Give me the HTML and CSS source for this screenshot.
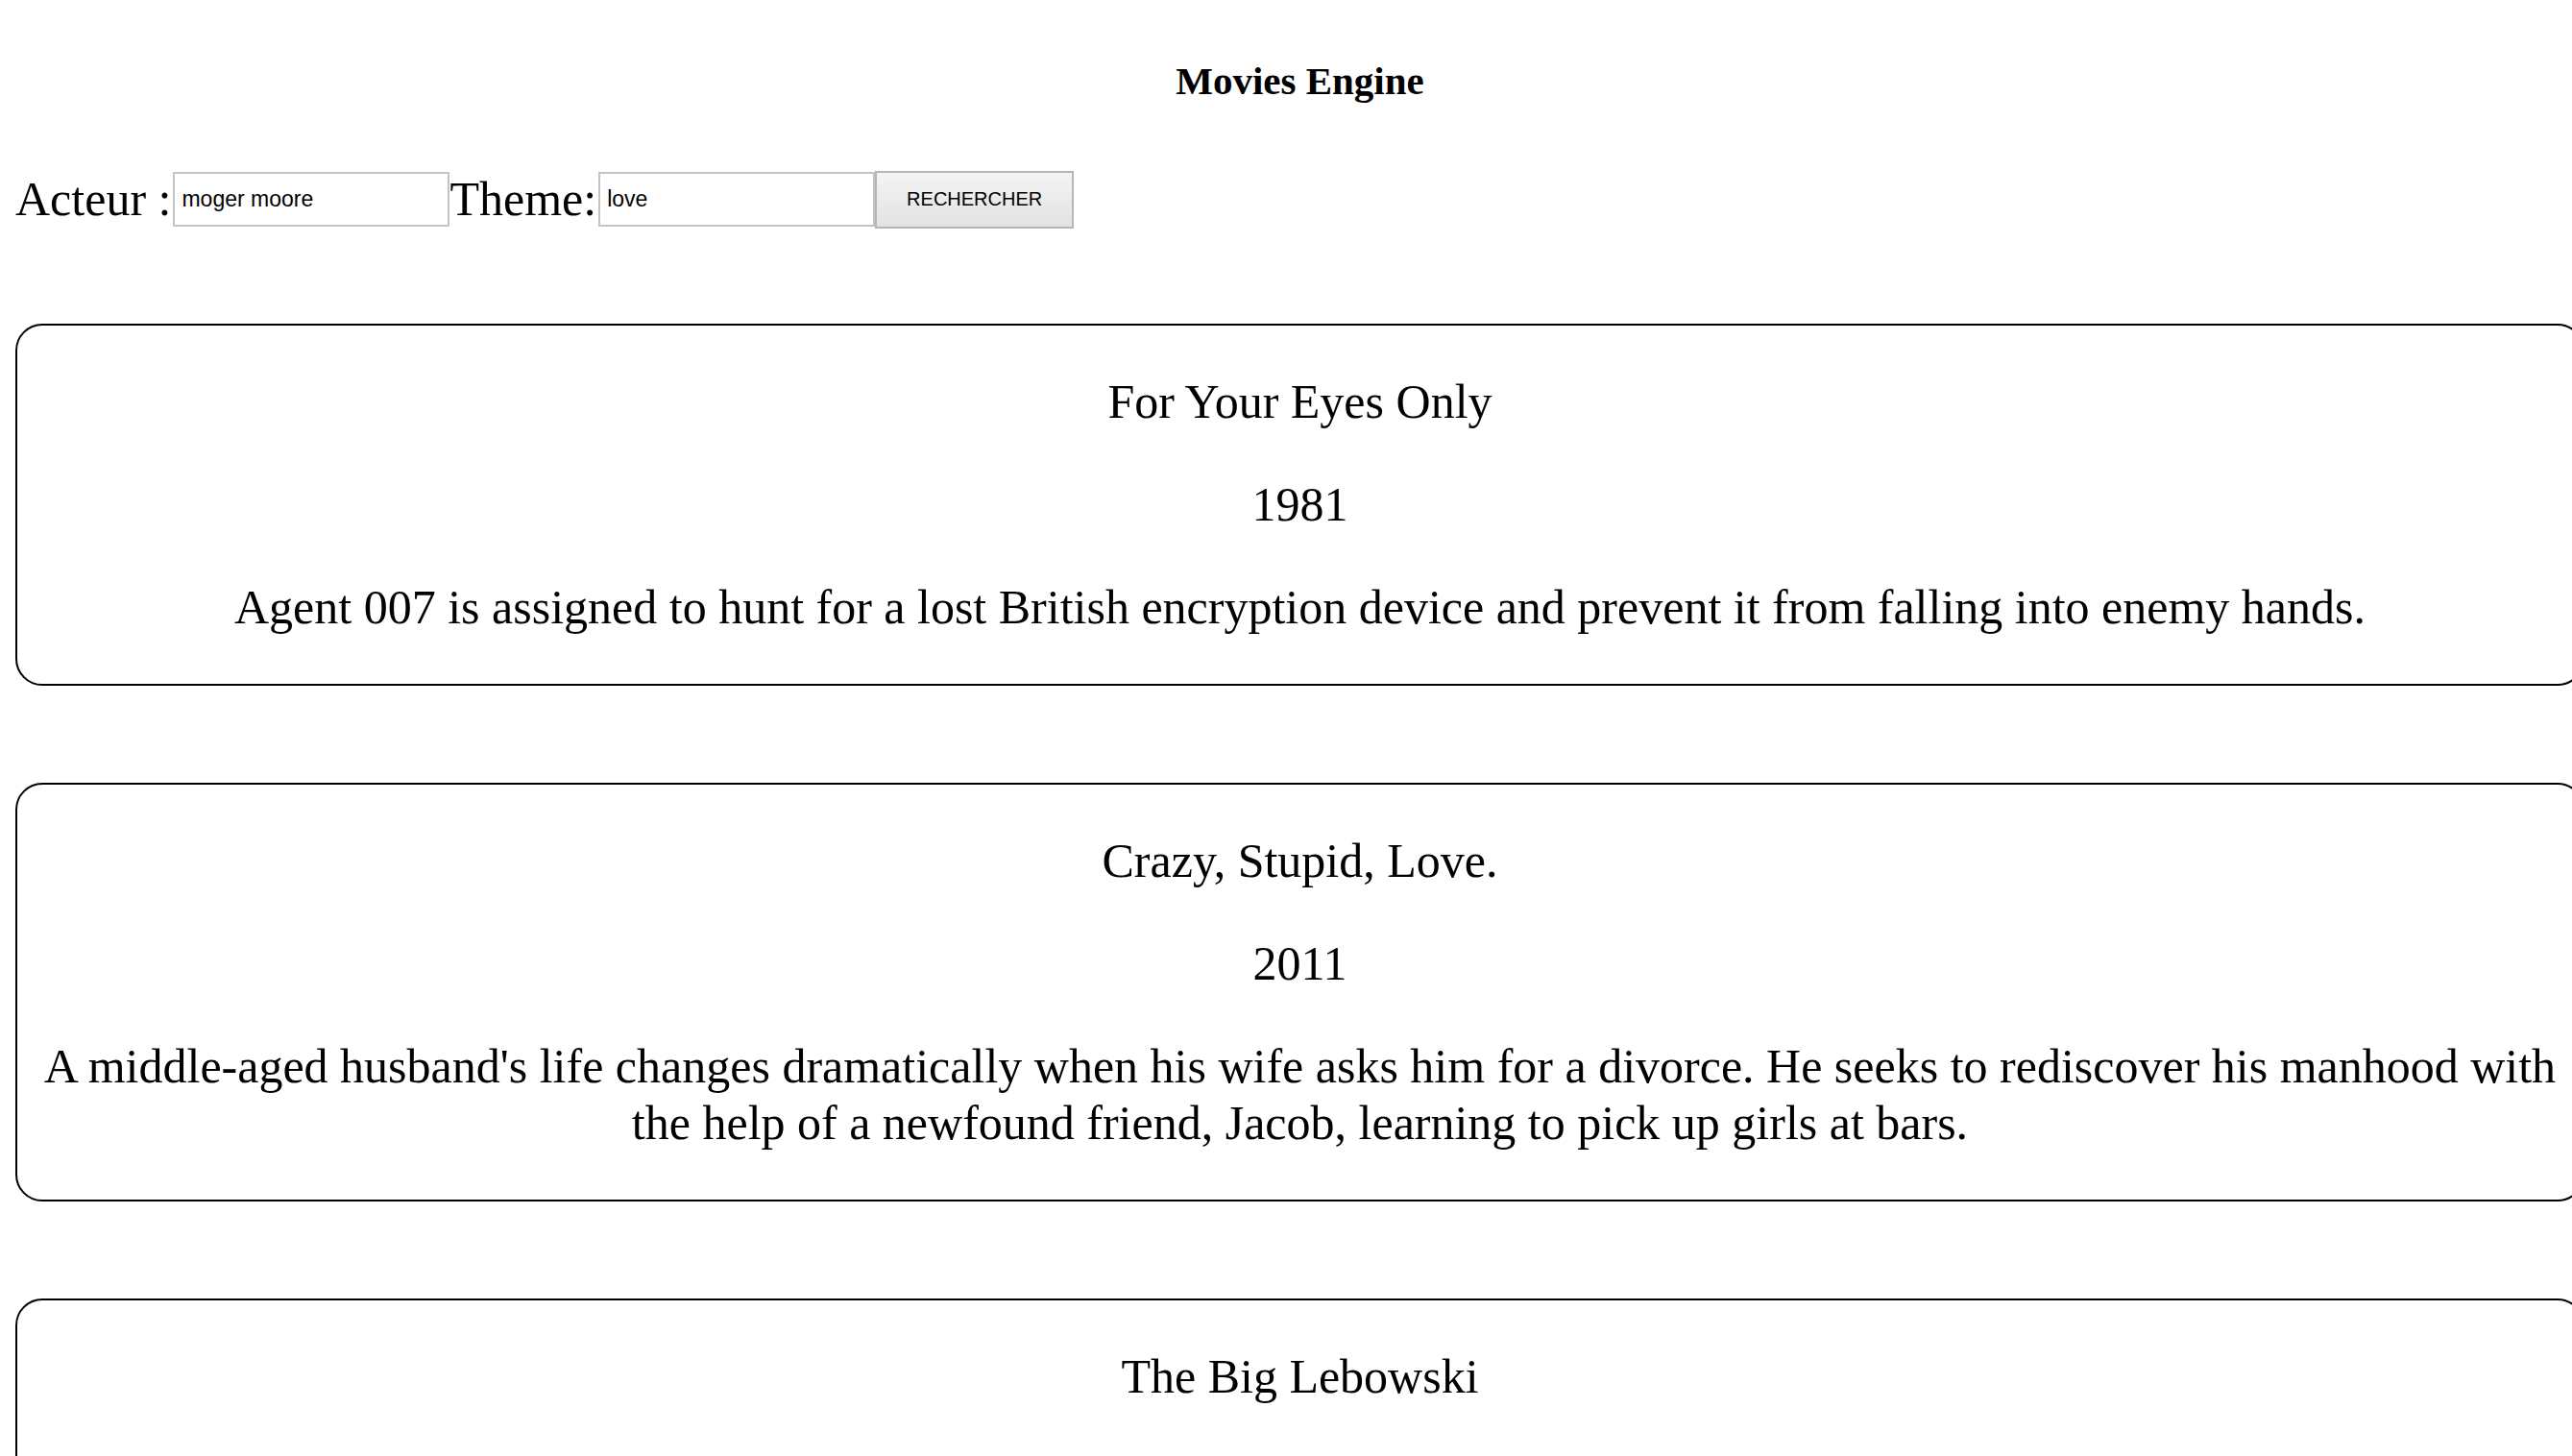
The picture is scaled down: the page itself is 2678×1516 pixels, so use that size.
FILE: index.html
```html
<!DOCTYPE html>
<html lang="fr">
<head>
<meta charset="utf-8">
<title>Movies Engine</title>
<link rel="stylesheet" href="styles.css">
</head>
<body>
<div class="page">
  <h1 class="app-title">Movies Engine</h1>
  <form class="search">
    <label class="search-label" for="acteur">Acteur :</label><input id="acteur" class="search-input" type="text" value="moger moore"><label class="search-label" for="theme">Theme:</label><input id="theme" class="search-input" type="text" value="love"><button type="button" class="search-btn">RECHERCHER</button>
  </form>
  <section class="results">
    <article class="movie">
      <p class="movie-title">For Your Eyes Only</p>
      <p class="movie-year">1981</p>
      <p class="movie-desc">Agent 007 is assigned to hunt for a lost British encryption device and prevent it from falling into enemy hands.</p>
    </article>
    <article class="movie">
      <p class="movie-title">Crazy, Stupid, Love.</p>
      <p class="movie-year">2011</p>
      <p class="movie-desc">A middle-aged husband's life changes dramatically when his wife asks him for a divorce. He seeks to rediscover his manhood with the help of a newfound friend, Jacob, learning to pick up girls at bars.</p>
    </article>
    <article class="movie">
      <p class="movie-title">The Big Lebowski</p>
      <p class="movie-year">1998</p>
      <p class="movie-desc">Jeff "The Dude" Lebowski, mistaken for a millionaire of the same name, seeks restitution for his ruined rug and enlists his bowling buddies to help get it.</p>
    </article>
  </section>
</div>
</body>
</html>
```

FILE: styles.css
```css
html, body {
  margin: 0;
  padding: 0;
  overflow: hidden;
  background: #ffffff;
}

body {
  font-family: "Liberation Serif", "Times New Roman", serif;
  color: #000000;
}

.page {
  width: 2675px;
  padding: 60px 0 0 16px;
}

.app-title {
  margin: 0;
  font-size: 41px;
  line-height: 48px;
  font-weight: bold;
  text-align: center;
}

.search {
  display: flex;
  align-items: center;
  height: 59px;
  margin: 70px 0 0 0;
}

.search-label {
  font-size: 50px;
  line-height: 55px;
  padding-right: 2px;
}

.search-input {
  box-sizing: border-box;
  width: 288px;
  height: 57px;
  margin: 0;
  padding: 0 7px;
  border: 2px solid #c4c4c4;
  border-radius: 0;
  font-family: "Liberation Sans", Arial, sans-serif;
  font-size: 23px;
  color: #000000;
  background: #ffffff;
  outline: none;
}

.search-btn {
  box-sizing: border-box;
  width: 207px;
  height: 60px;
  margin: 0;
  padding: 0;
  border: 2px solid #b6b6b6;
  border-radius: 0;
  background: linear-gradient(#f4f4f4, #e2e2e2);
  font-family: "Liberation Sans", Arial, sans-serif;
  font-size: 20px;
  color: #000000;
}

.results {
  display: flex;
  flex-direction: column;
  gap: 101px;
  margin-top: 100px;
}

.movie {
  border: 2px solid #000000;
  border-radius: 28px;
  padding: 2px 0;
  text-align: center;
}

.movie p {
  margin: 48px 0;
  font-size: 50px;
  line-height: 59px;
}
```
